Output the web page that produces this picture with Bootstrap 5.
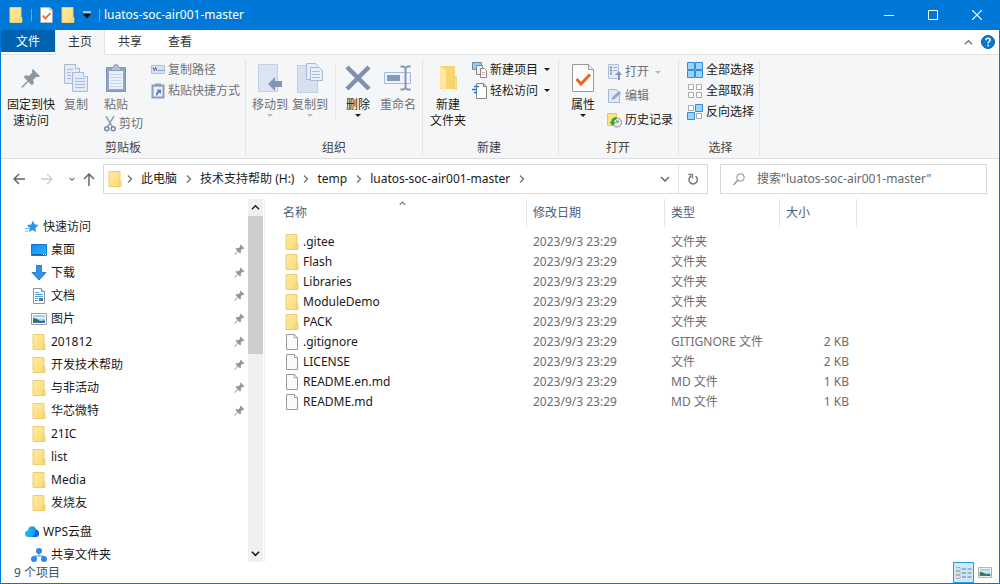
<!DOCTYPE html>
<html lang="zh-CN">
<head>
<meta charset="utf-8">
<meta name="viewport" content="width=device-width, initial-scale=1">
<title>luatos-soc-air001-master</title>
<link href="https://cdn.jsdelivr.net/npm/bootstrap@5.3.0/dist/css/bootstrap.min.css" rel="stylesheet">
<style>
:root{--accent:#0078d7;--edge:#e2e4e6;--ribbon:#f5f6f7}
body{font-family:"Noto Sans","Noto Sans CJK SC",sans-serif;font-size:12px;line-height:16px;color:#1a1a1a;background:#fff}
.btn{--bs-btn-font-size:12px;--bs-btn-line-height:16px;--bs-btn-color:#1a1a1a;--bs-btn-padding-x:0;--bs-btn-padding-y:0;--bs-btn-border-width:0;--bs-btn-border-radius:0;--bs-btn-disabled-opacity:1;--bs-btn-disabled-color:#6f7277;--bs-btn-hover-bg:#e5f1fb}
svg{display:block;flex:none}
a{color:inherit;text-decoration:none}
.window{height:100vh;border:1px solid var(--accent);border-top:0}
.titlebar{height:30px;background:var(--accent);color:#fff}
.titlebar .btn{--bs-btn-color:#fff;--bs-btn-hover-color:#fff;--bs-btn-hover-bg:#1a86db}
.titlebar h1{font-size:12px;line-height:16px}
.caption-btn{width:44px;height:30px;display:flex;align-items:center;justify-content:center}
.bar{width:1px;height:12px;background:#5fa8e2}
.tabs{height:25px;border-bottom:1px solid var(--edge)}
.tabs .nav-link{width:50px;height:25px;padding:4px 0;color:#333;text-align:center;line-height:16px}
.tabs .file-tab{width:54px;height:22px;background:#0063b1;color:#fff}
.tabs .nav-link.active{background:var(--ribbon);border:1px solid var(--edge);border-width:0 1px}
.ribbon{background:var(--ribbon);border-bottom:1px solid #dcdee0;padding:4px 0 2px}
.group{border-right:1px solid var(--edge);min-height:96px;padding:0 5px}
.tools{height:81px}
.group-title{line-height:16px;text-align:center;color:#444}
.big-btn{width:40px;padding-top:2px;display:flex;flex-direction:column;align-items:center;text-align:center}
.big-btn.wide{width:50px}
.big-btn .pic{height:34px;display:flex;align-items:center;margin-bottom:2px}
.big-btn .caret{margin-top:1px}
.small-btn{height:21px;display:flex;align-items:center;gap:3px;white-space:nowrap}
.roomy{padding-top:1px}
.roomy .small-btn{height:24px}
.caret{border:3px solid transparent;border-top-color:currentColor;border-bottom:0;width:0;height:0}
.small-btn .caret{margin-left:3px}
.disabled-mark{color:#b5b8bb}
.split{width:1px;height:54px;margin:6px 2px 0 5px;background:var(--edge)}
.address-row{padding:5px 12px 5px 8px}
.address,.search{height:30px;border:1px solid #d9d9d9;background:#fff}
.crumb{color:#1a1a1a}
.search{width:267px;margin-left:12px}
.search input{font-size:12px;line-height:16px;color:#1a1a1a;min-height:0}
.search input::placeholder{color:#666;opacity:1}
.sidebar{width:247px;padding-top:16px;overflow:hidden;line-height:14px}
.tree a{height:23px;display:flex;align-items:center;gap:4px;padding:0 3px 0 30px}
.tree .root{padding-left:24px}
.tree .section{margin-top:6px}
.scroll{width:15px;background:#f0f0f0}
.thumb{height:138px;background:#cdcdcd}
.scroll .btn{height:17px;display:flex;align-items:center;justify-content:center}
.edge{width:2px;margin-right:4px;border-right:1px solid #f0f0f0}
.files{table-layout:fixed;border-collapse:separate;border-spacing:0;width:588px}
.files th{height:28px;padding:0 0 0 6px;font-weight:400;color:#4c607a;vertical-align:middle;background:linear-gradient(#e2e4e6,#e2e4e6) right center/1px 28px no-repeat;position:relative}
.files th:first-child{padding-left:14px}
.files td{height:20px;padding:0 8px 0 6px;color:#6d6d6d;white-space:nowrap}
.files td:first-child{padding-left:16px;color:#1a1a1a}
.files .gap-row td{height:5px;padding:0}
.sort-mark{position:absolute;left:50%;top:1px}
.status{height:21px;color:#3c506b;padding:0 4px 0 13px}
.view-btn{width:21px;height:21px;display:flex;align-items:center;justify-content:center}
.view-btn.active{--bs-btn-active-bg:#cce8ff;--bs-btn-border-width:1px;--bs-btn-active-border-color:#26a0da}
</style>
</head>
<body>
<svg width="0" height="0" class="position-absolute" aria-hidden="true">
<defs>
<linearGradient id="gFolder" x1="0" x2="1" y2="1"><stop stop-color="#ffeaa2"/><stop offset="1" stop-color="#fddb75"/></linearGradient>
<linearGradient id="gDesk" x1="0" x2="1" y2="1"><stop stop-color="#0c8ff0"/><stop offset="1" stop-color="#2bb0ff"/></linearGradient>
<linearGradient id="gCloud" x1="0" x2="1"><stop stop-color="#1bbdf2"/><stop offset=".5" stop-color="#18a9ef"/><stop offset="1" stop-color="#1560ea"/></linearGradient>
</defs>
<symbol id="folder" viewBox="0 0 13 16"><path d="M.5.5h11v15H.5z" fill="url(#gFolder)" stroke="#eccf74"/><path d="M10.500 15.500V11l1-1.500 1 1.500v4.500z" fill="#ffe391" stroke="#e6c25a" stroke-width=".8"/></symbol>
<symbol id="page" viewBox="0 0 12 16"><path d="M.5.5h8l3 3v12H.5z" fill="#fafafa" stroke="#9a9a9a"/><path d="M8.500.5v3h3" fill="#fff" stroke="#9a9a9a"/></symbol>
<symbol id="pin" viewBox="0 0 22 22"><path d="M13 1l8 8-2 1-2-.5-3.500 3.500.5 4-2 2-4-4L2 21.500.5 21.700l.5-1.500L7 14l-4-4 2-2 4 .5L12.500 5 12 3z" fill="#8b98a3"/></symbol>
<symbol id="chev" viewBox="1 0 7 10"><path d="M3 1.500L6.500 5 3 8.500" fill="none" stroke="#777" stroke-width="1.400"/></symbol>
<symbol id="chevdown" viewBox="0 0 10 10"><path d="M1 3l4 4 4-4" fill="none" stroke="currentColor" stroke-width="1.700"/></symbol>
<symbol id="chevup" viewBox="0 0 10 10"><path d="M1 7l4-4 4 4" fill="none" stroke="currentColor" stroke-width="1.500"/></symbol>
<symbol id="check" viewBox="0 0 22 28"><path d="M.5.500h16l5 5v22H.5z" fill="#fdfdfd" stroke="#9a9a9a"/><path d="M16.500.500v5h5" fill="#eee" stroke="#9a9a9a"/><path d="M4.500 15l4.500 5 9-9.500" fill="none" stroke="#f2621f" stroke-width="3"/></symbol>
<symbol id="photo" viewBox="0 0 16 12"><path d="M.5.500h15v11H.5z" fill="#fff" stroke="#9b9b9b"/><path d="M2 2h12v8H2z" fill="#9fd0f4"/><path d="M2 4h12v2H2z" fill="#dcecf5"/><path d="M2 5q4 0 7 3l5-.5V10H2z" fill="#3f6c60"/><path d="M2 9h12v1H2z" fill="#3e78ad"/></symbol>
</svg>

<div class="window d-flex flex-column overflow-hidden">
<header class="titlebar d-flex align-items-center ps-2 flex-shrink-0">
  <svg width="14" height="16"><use href="#folder"/></svg>
  <span class="bar mx-2"></span>
  <button class="btn" aria-label="属性"><svg width="13" height="16"><use href="#check"/></svg></button>
  <button class="btn ms-2" aria-label="新建文件夹"><svg width="14" height="16"><use href="#folder"/></svg></button>
  <button class="btn ms-2" aria-label="自定义快速访问工具栏"><svg width="8" height="8" viewBox="0 0 8 8"><path d="M0 1h8" stroke="#fff" stroke-width="1.200"/><path d="M0 3h8L4 7.500z" fill="#111"/></svg></button>
  <span class="bar ms-2 me-1"></span>
  <h1 class="m-0 fw-normal flex-grow-1 text-truncate">luatos-soc-air001-master</h1>
  <button class="btn caption-btn" aria-label="最小化"><svg width="10" height="10"><path d="M0 5.500h10" stroke="#fff"/></svg></button>
  <button class="btn caption-btn" aria-label="最大化"><svg width="10" height="10"><path d="M.5.500h9v9h-9z" fill="none" stroke="#fff"/></svg></button>
  <button class="btn caption-btn" aria-label="关闭"><svg width="10" height="10"><path d="M0 0l10 10M10 0L0 10" stroke="#fff" stroke-width="1.200"/></svg></button>
</header>

<nav class="tabs nav flex-nowrap flex-shrink-0">
  <a class="nav-link file-tab" href="#">文件</a>
  <a class="nav-link active" href="#">主页</a>
  <a class="nav-link" href="#">共享</a>
  <a class="nav-link" href="#">查看</a>
  <div class="ms-auto d-flex align-items-center gap-2 pe-1">
    <button class="btn text-secondary" aria-label="最小化功能区"><svg width="9" height="9"><use href="#chevup"/></svg></button>
    <button class="btn" aria-label="帮助"><svg width="14" height="14" viewBox="0 0 14 14"><circle cx="7" cy="7" r="6.500" fill="#0877d2" stroke="#1e5d96"/><path d="M4.900 5.300q0-2 2.100-2t2.100 1.900c0 1.300-2 1.500-2 3.200" fill="none" stroke="#fff" stroke-width="1.400"/><circle cx="7.100" cy="10.500" r=".9" fill="#fff"/></svg></button>
  </div>
</nav>

<section class="ribbon d-flex flex-shrink-0">
  <div class="group">
    <div class="tools d-flex">
      <button class="btn big-btn wide"><span class="pic"><svg width="20" height="20"><use href="#pin"/></svg></span>固定到快速访问</button>
      <button class="btn big-btn" disabled><span class="pic"><svg width="24" height="28" viewBox="0 0 24 28"><g fill="#e3ebf7" stroke="#aab8d3"><path d="M.5.500h11l4 4v15H.5z"/><path d="M11.500.500v4h4" fill="#fff"/><path d="M8.500 8.500h11l4 4v15h-15z"/><path d="M19.500 8.500v4h4" fill="#fff"/></g><path d="M3 5.500h6M3 8.500h4M3 11.500h4M3 14.500h4M11 14.500h10M11 17.500h10M11 20.500h10M11 23.500h10" stroke="#a9bde0"/></svg></span>复制</button>
      <div class="me-2">
        <button class="btn big-btn" disabled><span class="pic"><svg width="20" height="28" viewBox="0 0 20 28"><path d="M.5 3.500h19v24H.5z" fill="#90a5ca" stroke="#8095bc"/><path d="M3 7h14v18H3z" fill="#eaf1fb"/><path d="M4 10.500h12M4 13.500h12M4 16.500h12M4 19.500h12M4 22.500h12" stroke="#c6d5ec"/><path d="M5.500 3.500h2q0-3 2.500-3t2.500 3h2v3h-9z" fill="#b4c2da" stroke="#8c9dbb"/></svg></span>粘贴</button>
        <button class="btn small-btn ps-2" disabled><svg width="12" height="16" viewBox="0 0 12 16"><path d="M2 0l6.500 11M10 0L3.500 11" fill="none" stroke="#91a1bc" stroke-width="1.500"/><g fill="none" stroke="#7288b0" stroke-width="1.500"><circle cx="2.800" cy="12.800" r="2"/><circle cx="9.200" cy="12.800" r="2"/></g></svg>剪切</button>
      </div>
      <div>
        <button class="btn small-btn" disabled><svg width="14" height="9" viewBox="0 0 14 9"><path d="M.5.500h13v8H.5z" fill="#d6e2f3" stroke="#b5c4db"/><path d="M2 2.500l1.500 3 1-3 1.500 3" fill="none" stroke="#44608f"/><path d="M7.500 5.500h1m1 0h1m1 0h1" stroke="#44608f"/></svg>复制路径</button>
        <button class="btn small-btn" disabled><svg width="14" height="16" viewBox="0 0 14 16"><path d="M1.500 2.500h11v12h-11z" fill="#eaf1fb" stroke="#8a9dbf" stroke-width="2"/><path d="M4 .5h6v3H4z" fill="#8b9fc0"/><path d="M5 12.500q-.5-3 2-4.500L5.500 6.500H10V11L8.500 9.500Q6.500 10.500 6.500 12.500z" fill="#6480ae"/></svg>粘贴快捷方式</button>
      </div>
    </div>
    <div class="group-title">剪贴板</div>
  </div>

  <div class="group px-1">
    <div class="tools d-flex">
      <button class="btn big-btn" disabled><span class="pic"><svg width="26" height="28" viewBox="0 0 26 28"><path d="M1.500.500h19v27h-19z" fill="#dae4f3" stroke="#c4d2e8"/><path d="M11 20l7-7v4h7v6h-7v4z" fill="#8496b6"/></svg></span>移动到<span class="caret disabled-mark"></span></button>
      <button class="btn big-btn" disabled><span class="pic"><svg width="26" height="30" viewBox="0 0 26 30"><path d="M.5 2.500h20v27H.5z" fill="#d6e1f1" stroke="#c0cee5"/><g fill="#e8eff9" stroke="#a9b9d5"><path d="M9.500.500h9l3 3v13h-12z"/><path d="M13.500 4.500h9l3 3v10h-12z"/></g><path d="M15 8.500h8M15 11.500h8M15 14.500h8" stroke="#a9bde0"/></svg></span>复制到<span class="caret disabled-mark"></span></button>
      <div class="split"></div>
      <button class="btn big-btn"><span class="pic"><svg width="26" height="26" viewBox="0 0 26 26"><path d="M2 2l22 22M24 2L2 24" stroke="#8091b0" stroke-width="4.500"/></svg></span>删除<span class="caret"></span></button>
      <button class="btn big-btn" disabled><span class="pic"><svg width="28" height="26" viewBox="0 0 28 26"><path d="M.5 7.500h26v11H.5z" fill="#eef4fc" stroke="#a8bad7"/><path d="M3 10h13v6H3z" fill="#8499bd"/><path d="M16.500 1.500h3l2 1.500 2-1.500h3M21.500 3v20M16.500 24.500h3l2-1.500 2 1.500h3" fill="none" stroke="#8596b3" stroke-width="2"/></svg></span>重命名</button>
    </div>
    <div class="group-title">组织</div>
  </div>

  <div class="group pe-2">
    <div class="tools d-flex gap-1">
      <button class="btn big-btn"><span class="pic"><svg width="18" height="27" viewBox="0 0 18 27"><path d="M1 1h15v12l2 2v9H1z" fill="#f9d470"/><path d="M1 1l6 4v21l-6-4z" fill="#ffe8a0"/><path d="M15 24V14l1.500-3 1.500 3v10z" fill="#fae08d" stroke="#e8bf58" stroke-width=".6"/></svg></span>新建<br>文件夹</button>
      <div>
        <button class="btn small-btn"><svg width="15" height="16" viewBox="0 0 15 16"><path d="M.5.500h9v7h-9z" fill="#91cdf0" stroke="#698ba3"/><path d="M4.500 3.500h6v9h-6z" fill="#e9f2f8" stroke="#888"/><path d="M8.500 6.500h4l2 2v7h-6z" fill="#fff" stroke="#888"/><path d="M10 10.500h3M10 12.500h3" stroke="#dba0a8"/></svg>新建项目<span class="caret"></span></button>
        <button class="btn small-btn"><svg width="15" height="16" viewBox="0 0 15 16"><path d="M4.500.500h7l3 3v12h-10z" fill="#fff" stroke="#858585"/><path d="M11.500.500v3h3" fill="none" stroke="#858585"/><path d="M2 3.500h5M0 6.500h5M2 9.500h3" stroke="#2277c9" stroke-width="1.500"/></svg>轻松访问<span class="caret"></span></button>
      </div>
    </div>
    <div class="group-title">新建</div>
  </div>

  <div class="group ps-1">
    <div class="tools d-flex gap-1">
      <button class="btn big-btn"><span class="pic"><svg width="22" height="28"><use href="#check"/></svg></span>属性<span class="caret"></span></button>
      <div class="roomy">
        <button class="btn small-btn" disabled><svg width="15" height="16" viewBox="0 0 15 16"><path d="M1.500.500h10v14h-10z" fill="#e1eaf7" stroke="#b1bfd6"/><path d="M3 3.500h2M3 6.500h2M3 9.500h2" stroke="#7d93bb" stroke-width="2"/><path d="M6 3.500h4M6 6.500h4" stroke="#a1b2d0"/><path d="M11 16V11H8l4-4 3 4h-2v5z" fill="#8196bc"/></svg>打开<span class="caret disabled-mark"></span></button>
        <button class="btn small-btn" disabled><svg width="15" height="16" viewBox="0 0 15 16"><path d="M1.500 1.500h8l3 3v10h-11z" fill="#e1eaf7" stroke="#a6b7d2"/><path d="M4.500 12l1-3L12 3l2 2-6.500 6z" fill="#90a5c8"/></svg>编辑</button>
        <button class="btn small-btn"><svg width="15" height="16" viewBox="0 0 15 16"><path d="M.5 1.500h9v12h-9z" fill="#ffe184" stroke="#e7c75e"/><circle cx="10" cy="10.500" r="4.500" fill="#eee" stroke="#8e8e8e"/><path d="M10 8v3l2-2" fill="none" stroke="#777"/><path d="M9.500 5q-5 0-5.500 5H2.500l3 4 3.500-4H7q0-2 2.500-2.500z" fill="#36a834"/></svg>历史记录</button>
      </div>
    </div>
    <div class="group-title">打开</div>
  </div>

  <div class="group ps-2">
    <div class="tools">
      <button class="btn small-btn"><svg width="16" height="16" viewBox="0 0 16 16"><g fill="#9bd3fb" stroke="#2c90dc"><path d="M.5.500h7v7h-7zM8.500.500h7v7h-7zM.5 8.500h7v7h-7zM8.500 8.500h7v7h-7z"/></g></svg>全部选择</button>
      <button class="btn small-btn"><svg width="16" height="16" viewBox="0 0 16 16"><g fill="#fdfdfd" stroke="#aaa"><path d="M1.500 1.500h5v5h-5zM9.500 1.500h5v5h-5zM1.500 9.500h5v5h-5zM9.500 9.500h5v5h-5z"/></g></svg>全部取消</button>
      <button class="btn small-btn"><svg width="16" height="16" viewBox="0 0 16 16"><g fill="#fdfdfd" stroke="#aaa"><path d="M1.500 1.500h5v5h-5zM9.500 9.500h5v5h-5z"/></g><g fill="#9bd3fb" stroke="#2c90dc"><path d="M8.500.500h7v7h-7zM.5 8.500h7v7h-7z"/></g></svg>反向选择</button>
    </div>
    <div class="group-title">选择</div>
  </div>
</section>

<div class="address-row d-flex align-items-center flex-shrink-0">
  <button class="btn p-0 ms-1" aria-label="后退"><svg width="12" height="12" viewBox="0 0 12 12"><path d="M12 6H1M6 1L1 6l5 5" fill="none" stroke="#666" stroke-width="1.500"/></svg></button>
  <button class="btn ms-3" aria-label="前进" disabled><svg width="12" height="12" viewBox="0 0 12 12"><path d="M0 6h11M6 1l5 5-5 5" fill="none" stroke="#ccc" stroke-width="1.300"/></svg></button>
  <button class="btn ms-3 text-secondary" aria-label="最近浏览的位置"><svg width="6" height="6"><use href="#chevdown"/></svg></button>
  <button class="btn ms-1 px-1 me-1" aria-label="上移"><svg width="12" height="13" viewBox="0 0 12 13"><path d="M6 13V1M1 6l5-5 5 5" fill="none" stroke="#666" stroke-width="1.500"/></svg></button>
  <div class="address d-flex align-items-center flex-grow-1">
    <svg width="14" height="16" class="ms-1"><use href="#folder"/></svg>
    <nav class="d-flex align-items-center gap-2 ms-1 flex-grow-1" aria-label="路径">
      <svg width="7" height="10"><use href="#chev"/></svg><a class="crumb" href="#">此电脑</a>
      <svg width="7" height="10"><use href="#chev"/></svg><a class="crumb" href="#">技术支持帮助 (H:)</a>
      <svg width="7" height="10"><use href="#chev"/></svg><a class="crumb" href="#">temp</a>
      <svg width="7" height="10"><use href="#chev"/></svg><a class="crumb" href="#">luatos-soc-air001-master</a>
      <svg width="7" height="10"><use href="#chev"/></svg>
    </nav>
    <button class="btn px-2 text-secondary" aria-label="以前的位置"><svg width="10" height="10"><use href="#chevdown"/></svg></button>
    <button class="btn px-2 h-100 border-start" aria-label="刷新"><svg width="12" height="12" viewBox="0 0 12 12"><path d="M8.500 3.200A4.200 4.200 0 1 1 4.200 3" fill="none" stroke="#777" stroke-width="1.500"/><path d="M1.500 1.500h4V5.500" fill="none" stroke="#777" stroke-width="1.300"/></svg></button>
  </div>
  <label class="search d-flex align-items-center ps-2">
    <svg width="12" height="13" viewBox="0 0 12 13" class="ms-1 me-2"><circle cx="7.500" cy="4.500" r="3.800" fill="none" stroke="#888"/><path d="M4.800 7.200L.5 12" stroke="#888" stroke-width="1.200"/></svg>
    <input class="form-control border-0 rounded-0 shadow-none p-0 ms-1 bg-transparent" type="search" aria-label="搜索" placeholder="搜索&quot;luatos-soc-air001-master&quot;">
  </label>
</div>

<main class="d-flex flex-grow-1 overflow-hidden">
  <nav class="sidebar flex-shrink-0 tree" aria-label="导航窗格">
    <a class="root" href="#"><svg width="14" height="14" viewBox="0 0 14 14"><path d="M8 .5l1.500 3.700 4 .8-3 2.800.5 4.200-3.500-2L4 12l.8-3.700L2 5l4.200-.5z" fill="#2a96e6"/><path d="M0 8.500h4M0 11h3" stroke="#66b5ed"/></svg>快速访问</a>
    <a href="#"><svg width="16" height="12" viewBox="0 0 16 12"><path d="M.5.500h15v11H.5z" fill="url(#gDesk)" stroke="#0b78c8"/><path d="M1 10.500h14" stroke="#1268a8"/><path d="M12 10.500h1m1 0h1" stroke="#fff"/></svg>桌面<svg width="11" height="11" class="ms-auto"><use href="#pin"/></svg></a>
    <a href="#"><svg width="16" height="16" viewBox="0 0 16 16"><path d="M5.500.500h5v7h4.500L8 15 1 7.500h4.500z" fill="#3791e2" stroke="#2d7fcb"/></svg>下载<svg width="11" height="11" class="ms-auto"><use href="#pin"/></svg></a>
    <a href="#"><svg width="16" height="16" viewBox="0 0 16 16"><path d="M2.500.500h8l3 3v12h-11z" fill="#fff" stroke="#8c979e"/><path d="M10.500.500v3h3" fill="#dce5ec" stroke="#8c979e"/><path d="M4 4.500h4M4 6.500h8M4 8.500h8M4 10.500h3M4 12.500h3" stroke="#4da7dd"/><path d="M8 10h4v3H8z" fill="#57768c"/></svg>文档<svg width="11" height="11" class="ms-auto"><use href="#pin"/></svg></a>
    <a href="#"><svg width="16" height="12"><use href="#photo"/></svg>图片<svg width="11" height="11" class="ms-auto"><use href="#pin"/></svg></a>
    <a href="#"><svg width="16" height="16"><use href="#folder"/></svg>201812<svg width="11" height="11" class="ms-auto"><use href="#pin"/></svg></a>
    <a href="#"><svg width="16" height="16"><use href="#folder"/></svg>开发技术帮助<svg width="11" height="11" class="ms-auto"><use href="#pin"/></svg></a>
    <a href="#"><svg width="16" height="16"><use href="#folder"/></svg>与非活动<svg width="11" height="11" class="ms-auto"><use href="#pin"/></svg></a>
    <a href="#"><svg width="16" height="16"><use href="#folder"/></svg>华芯微特<svg width="11" height="11" class="ms-auto"><use href="#pin"/></svg></a>
    <a href="#"><svg width="16" height="16"><use href="#folder"/></svg>21IC</a>
    <a href="#"><svg width="16" height="16"><use href="#folder"/></svg>list</a>
    <a href="#"><svg width="16" height="16"><use href="#folder"/></svg>Media</a>
    <a href="#"><svg width="16" height="16"><use href="#folder"/></svg>发烧友</a>
    <a class="root section" href="#"><svg width="14" height="11" viewBox="0 0 14 11"><path d="M3.500 11Q0 11 0 7.800T3 4.500Q3.500.300 7.300.300 10 .3 11 3.500 14 4.500 14 7.500 14 11 10.500 11z" fill="url(#gCloud)"/><path d="M6 11q4-1 5-7.500 3 1 3 4T10.500 11z" fill="#1560ea"/></svg>WPS云盘</a>
    <a href="#"><svg width="16" height="14" viewBox="0 0 16 14"><path d="M8 4v4M3 11l1-3h8l1 3" fill="none" stroke="#7fb5f7" stroke-width="1.500"/><g fill="#2c86f2"><circle cx="8" cy="3" r="3"/><circle cx="3" cy="11" r="3"/><circle cx="13" cy="11" r="3"/></g></svg>共享文件夹</a>
  </nav>
  <div class="scroll d-flex flex-column flex-shrink-0">
    <button class="btn" aria-label="向上滚动"><svg width="9" height="9"><use href="#chevup"/></svg></button>
    <div class="thumb"></div>
    <button class="btn mt-auto" aria-label="向下滚动"><svg width="9" height="9"><use href="#chevdown"/></svg></button>
  </div>
  <div class="edge flex-shrink-0"></div>
  <div class="flex-grow-1 overflow-hidden">
    <table class="files">
      <colgroup><col><col style="width:138px"><col style="width:115px"><col style="width:77px"></colgroup>
      <thead><tr><th>名称<svg width="9" height="7" class="sort-mark text-secondary"><use href="#chevup"/></svg></th><th>修改日期</th><th>类型</th><th>大小</th></tr></thead>
      <tbody>
        <tr class="gap-row"><td colspan="4"></td></tr>
        <tr><td><a class="d-flex align-items-center gap-1" href="#"><svg width="14" height="16"><use href="#folder"/></svg>.gitee</a></td><td>2023/9/3 23:29</td><td>文件夹</td><td></td></tr>
        <tr><td><a class="d-flex align-items-center gap-1" href="#"><svg width="14" height="16"><use href="#folder"/></svg>Flash</a></td><td>2023/9/3 23:29</td><td>文件夹</td><td></td></tr>
        <tr><td><a class="d-flex align-items-center gap-1" href="#"><svg width="14" height="16"><use href="#folder"/></svg>Libraries</a></td><td>2023/9/3 23:29</td><td>文件夹</td><td></td></tr>
        <tr><td><a class="d-flex align-items-center gap-1" href="#"><svg width="14" height="16"><use href="#folder"/></svg>ModuleDemo</a></td><td>2023/9/3 23:29</td><td>文件夹</td><td></td></tr>
        <tr><td><a class="d-flex align-items-center gap-1" href="#"><svg width="14" height="16"><use href="#folder"/></svg>PACK</a></td><td>2023/9/3 23:29</td><td>文件夹</td><td></td></tr>
        <tr><td><a class="d-flex align-items-center gap-1" href="#"><svg width="14" height="16"><use href="#page"/></svg>.gitignore</a></td><td>2023/9/3 23:29</td><td>GITIGNORE 文件</td><td class="text-end">2 KB</td></tr>
        <tr><td><a class="d-flex align-items-center gap-1" href="#"><svg width="14" height="16"><use href="#page"/></svg>LICENSE</a></td><td>2023/9/3 23:29</td><td>文件</td><td class="text-end">2 KB</td></tr>
        <tr><td><a class="d-flex align-items-center gap-1" href="#"><svg width="14" height="16"><use href="#page"/></svg>README.en.md</a></td><td>2023/9/3 23:29</td><td>MD 文件</td><td class="text-end">1 KB</td></tr>
        <tr><td><a class="d-flex align-items-center gap-1" href="#"><svg width="14" height="16"><use href="#page"/></svg>README.md</a></td><td>2023/9/3 23:29</td><td>MD 文件</td><td class="text-end">1 KB</td></tr>
      </tbody>
    </table>
  </div>
</main>

<footer class="status d-flex align-items-center flex-shrink-0">
  <span class="me-auto">9 个项目</span>
  <button class="btn view-btn active" aria-label="详细信息"><svg width="16" height="12" viewBox="0 0 16 12"><path d="M0 .5h4v3H0zM0 4.500h4v3H0zM0 8.500h4v3H0z" fill="#fff" stroke="#999" stroke-width=".7"/><path d="M1.500 2h1" stroke="#3a7ac0"/><path d="M1.500 6h1" stroke="#3aa060"/><path d="M1.500 10h1" stroke="#d05050"/><path d="M6 2h4m1.500 0h4M6 6h4m1.500 0h4M6 10h4m1.500 0h4" stroke="#777"/></svg></button>
  <button class="btn view-btn" aria-label="大图标"><svg width="14" height="11"><use href="#photo"/></svg></button>
</footer>
</div>
<script src="https://cdn.jsdelivr.net/npm/bootstrap@5.3.0/dist/js/bootstrap.bundle.min.js"></script>
</body>
</html>
